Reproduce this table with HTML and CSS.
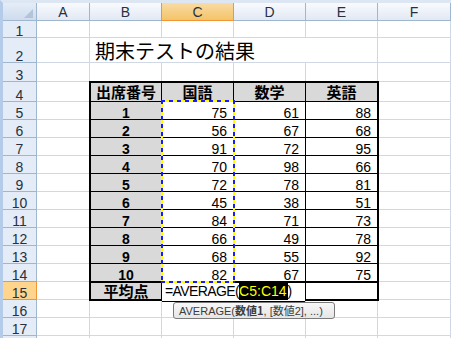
FILE: index.html
```html
<!DOCTYPE html>
<html lang="ja">
<head>
<meta charset="utf-8">
<title>期末テストの結果</title>
<link rel="stylesheet" href="styles.css">
</head>
<body>
<div class="sheet">
  <div class="corner"><span class="tri"></span></div>
  <div class="ch">A</div>
  <div class="ch">B</div>
  <div class="ch ch-sel">C</div>
  <div class="ch">D</div>
  <div class="ch">E</div>
  <div class="ch">F</div>

  <div class="rh">1</div><div class="c"></div><div class="c"></div><div class="c"></div><div class="c"></div><div class="c"></div><div class="c"></div>
  <div class="rh">2</div><div class="c"></div><div class="c title">期末テストの結果</div><div class="c"></div><div class="c"></div>
  <div class="rh">3</div><div class="c"></div><div class="c"></div><div class="c"></div><div class="c"></div><div class="c"></div><div class="c"></div>
  <div class="rh">4</div><div class="c"></div><div class="c"></div>
  <div class="rh">5</div><div class="c"></div><div class="c"></div>
  <div class="rh">6</div><div class="c"></div><div class="c"></div>
  <div class="rh">7</div><div class="c"></div><div class="c"></div>
  <div class="rh">8</div><div class="c"></div><div class="c"></div>
  <div class="rh">9</div><div class="c"></div><div class="c"></div>
  <div class="rh">10</div><div class="c"></div><div class="c"></div>
  <div class="rh">11</div><div class="c"></div><div class="c"></div>
  <div class="rh">12</div><div class="c"></div><div class="c"></div>
  <div class="rh">13</div><div class="c"></div><div class="c"></div>
  <div class="rh">14</div><div class="c"></div><div class="c"></div>
  <div class="rh rh-sel">15</div><div class="c"></div><div class="c"></div>
  <div class="rh">16</div><div class="c"></div><div class="c"></div><div class="c"></div><div class="c"></div><div class="c"></div><div class="c"></div>
  <div class="rh">17</div><div class="c"></div><div class="c"></div><div class="c"></div><div class="c"></div><div class="c"></div><div class="c"></div>
  <div class="rh"></div><div class="c"></div><div class="c"></div><div class="c"></div><div class="c"></div><div class="c"></div><div class="c"></div>

  <div class="tbl">
    <div class="t hd">出席番号</div><div class="t hd">国語</div><div class="t hd">数学</div><div class="t hd">英語</div>
    <div class="t id">1</div><div class="t n">75</div><div class="t n">61</div><div class="t n">88</div>
    <div class="t id">2</div><div class="t n">56</div><div class="t n">67</div><div class="t n">68</div>
    <div class="t id">3</div><div class="t n">91</div><div class="t n">72</div><div class="t n">95</div>
    <div class="t id">4</div><div class="t n">70</div><div class="t n">98</div><div class="t n">66</div>
    <div class="t id">5</div><div class="t n">72</div><div class="t n">78</div><div class="t n">81</div>
    <div class="t id">6</div><div class="t n">45</div><div class="t n">38</div><div class="t n">51</div>
    <div class="t id">7</div><div class="t n">84</div><div class="t n">71</div><div class="t n">73</div>
    <div class="t id">8</div><div class="t n">66</div><div class="t n">49</div><div class="t n">78</div>
    <div class="t id">9</div><div class="t n">68</div><div class="t n">55</div><div class="t n">92</div>
    <div class="t id">10</div><div class="t n">82</div><div class="t n">67</div><div class="t n">75</div>
    <div class="t hd last">平均点</div><div class="t n last"></div><div class="t n last"></div><div class="t n last"></div>
  </div>

  <div class="ants"></div>
  <div class="edit"><span class="fx-pre">=AVERAGE(</span><span class="ref">C5:C14</span>)</div>
  <div class="tip">AVERAGE(<b>数値1</b>, [数値2], ...)</div>
</div>
</body>
</html>
```

FILE: styles.css
```css
* { box-sizing: border-box; }
html, body { margin: 0; padding: 0; }
body {
  width: 451px;
  height: 338px;
  overflow: hidden;
  background: #fff;
  font-family: "Liberation Sans", "Noto Sans CJK JP", sans-serif;
  color: #000;
}
.sheet {
  position: relative;
  display: grid;
  grid-template-columns: 34px 53px 72px 72px 72px 72px 73px;
  grid-template-rows: 18px 17px 25px 19px 20px repeat(13, 18px) 3px;
  border-left: 3px solid #b4cbea;
  border-top: 3px solid #dde7f4;
  width: 451px;
  height: 338px;
  overflow: hidden;
}
.c {
  border-right: 1px solid #d0d7e5;
  border-bottom: 1px solid #d0d7e5;
}
.corner {
  position: relative;
  background: linear-gradient(#e4ecf7, #cfdcee);
  border-right: 1px solid #9eb6ce;
  border-bottom: 1px solid #9eb6ce;
}
.tri {
  position: absolute;
  right: 3px;
  bottom: 2px;
  width: 9px;
  height: 9px;
  background: #b3c3d8;
  clip-path: polygon(100% 0, 100% 100%, 0 100%);
}
.ch {
  display: flex;
  align-items: center;
  justify-content: center;
  background: linear-gradient(#f8fafd, #e2e9f4);
  border-right: 1px solid #9eb6ce;
  border-bottom: 1px solid #9eb6ce;
  color: #27313e;
  font-size: 14px;
  line-height: 14px;
}
.ch-sel {
  background: linear-gradient(#f9dba4, #f3c469);
  border-right-color: #f29536;
  border-bottom-color: #f29536;
  box-shadow: -1px 0 0 #f29536;
}
.rh {
  display: flex;
  align-items: flex-end;
  justify-content: center;
  background: #e4ecf7;
  border-right: 1px solid #9eb6ce;
  border-bottom: 1px solid #9eb6ce;
  color: #27313e;
  font-size: 14px;
  line-height: 12px;
}
.rh-sel {
  background: #ffd58d;
  border-right-color: #f29536;
  border-bottom-color: #f29536;
  box-shadow: 0 -1px 0 #f29536;
}
.title {
  grid-column: span 3;
  display: flex;
  align-items: flex-end;
  padding-left: 5px;
  border-right: none;
  font-family: "Noto Sans CJK JP", sans-serif;
  font-size: 20px;
  line-height: 22px;
  white-space: nowrap;
}

/* data table B4:E15 */
.tbl {
  grid-column: 3 / 7;
  grid-row: 5 / 17;
  align-self: start;
  justify-self: start;
  margin: -1px 0 0 -1px;
  z-index: 1;
  display: grid;
  grid-template-columns: 70px 71px 71px 71px;
  grid-template-rows: 18px repeat(10, 17px) 17px;
  gap: 1px;
  background: #000;
  border: 2px solid #000;
}
.t {
  display: flex;
  background: #fff;
  font-size: 14px;
  line-height: 12px;
}
.hd {
  align-items: center;
  justify-content: center;
  background: #d9d9d9;
  font-family: "Noto Sans CJK JP", sans-serif;
  font-weight: 700;
  font-size: 15px;
  line-height: 15px;
  padding-bottom: 1px;
}
.id {
  align-items: flex-end;
  justify-content: center;
  background: #d9d9d9;
  font-weight: 700;
}
.n {
  align-items: flex-end;
  justify-content: flex-end;
  padding-right: 6px;
}
.last { border-top: 1px solid #000; }

/* overlays */
.ants {
  position: absolute;
  left: 158px;
  top: 97px;
  width: 74px;
  height: 183px;
  z-index: 2;
  background:
    repeating-linear-gradient(90deg, #1a1aff 0 4px, #ffff00 4px 8px) top left / 100% 2px no-repeat,
    repeating-linear-gradient(90deg, #1a1aff 0 4px, #ffff00 4px 8px) bottom left / 100% 2px no-repeat,
    repeating-linear-gradient(180deg, #1a1aff 0 4px, #ffff00 4px 8px) top left / 2px 100% no-repeat,
    repeating-linear-gradient(180deg, #1a1aff 0 4px, #ffff00 4px 8px) top right / 2px 100% no-repeat;
}
.edit {
  position: absolute;
  left: 159px;
  top: 280px;
  width: 143px;
  height: 19px;
  z-index: 3;
  background: #fff;
  border-bottom: 1px solid #000;
  padding-left: 3px;
  font-size: 14px;
  line-height: 17px;
  white-space: nowrap;
}
.fx-pre { letter-spacing: -0.6px; }
.ref {
  display: inline-block;
  height: 17px;
  padding-right: 1px;
  background: #000;
  color: #ffff00;
}
.tip {
  position: absolute;
  left: 170px;
  top: 299px;
  width: 162px;
  height: 17px;
  z-index: 4;
  padding-left: 5px;
  border: 1px solid #7a7a7a;
  border-radius: 3px;
  background: linear-gradient(#f7f7f7, #e6e6e6);
  color: #3c3c3c;
  font-size: 11px;
  line-height: 15px;
  white-space: nowrap;
}
.tip b { font-family: "Noto Sans CJK JP", sans-serif; }
```
